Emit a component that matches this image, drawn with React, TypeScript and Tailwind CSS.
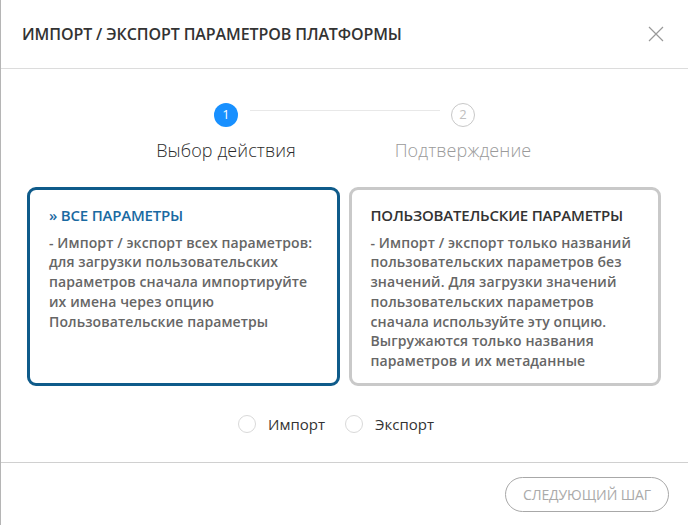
import { useState } from "react";

type Option = {
    id: string;
    title: string;
    text: string;
};

const options: Option[] = [
    {
        id: "all",
        title: "» ВСЕ ПАРАМЕТРЫ",
        text: "- Импорт / экспорт всех параметров: для загрузки пользовательских параметров сначала импортируйте их имена через опцию Пользовательские параметры",
    },
    {
        id: "custom",
        title: "ПОЛЬЗОВАТЕЛЬСКИЕ ПАРАМЕТРЫ",
        text: "- Импорт / экспорт только названий пользовательских параметров без значений. Для загрузки значений пользовательских параметров сначала используйте эту опцию. Выгружаются только названия параметров и их метаданные",
    },
];

export default function App() {
    const [selected, setSelected] = useState("all");
    const [mode, setMode] = useState<string | null>(null);

    return (
        <div
            className="w-[688px] h-[525px] bg-white border-l border-[#b5b5b5] flex flex-col text-[#333]"
            style={{ fontFamily: '"Open Sans", "Noto Sans", sans-serif' }}
        >
            {/* header */}
            <div className="h-[69px] shrink-0 flex items-center justify-between pl-[21px] pr-[24px] border-b border-[#dcdcdc]">
                <h2 className="text-[16px] font-semibold tracking-[-0.1px] text-[#333]">
                    ИМПОРТ / ЭКСПОРТ ПАРАМЕТРОВ ПЛАТФОРМЫ
                </h2>
                <button className="text-[#999]">
                    <svg width="16" height="16" viewBox="0 0 16 16" stroke="currentColor" strokeWidth="1.2">
                        <path d="M1 1 L15 15 M15 1 L1 15" />
                    </svg>
                </button>
            </div>

            {/* body */}
            <div className="flex-1 flex flex-col">
                {/* steps */}
                <div className="pt-[34px] flex justify-center">
                    <div className="flex items-start">
                        <div className="flex flex-col items-center w-[160px]">
                            <div className="w-6 h-6 rounded-full bg-[#1890ff] text-white text-[13px] flex items-center justify-center">
                                1
                            </div>
                            <span className="mt-[10px] text-[18px] font-light text-[#2b2b2b] tracking-[0.1px]">Выбор действия</span>
                        </div>
                        <div className="w-[190px] h-px bg-[#e8e8e8] mt-[7px] ml-[-56px] mr-[-57px]" />
                        <div className="flex flex-col items-center w-[160px]">
                            <div className="w-6 h-6 rounded-full border border-[#c8c8c8] text-[#c0c0c0] text-[13px] flex items-center justify-center">
                                2
                            </div>
                            <span className="mt-[10px] text-[18px] font-light text-[#9a9a9a] tracking-[0.1px]">Подтверждение</span>
                        </div>
                    </div>
                </div>

                {/* cards */}
                <div className="mt-[23px] pl-[26px] pr-[27px] grid grid-cols-2 gap-[9px]">
                    {options.map((o) => {
                        const active = o.id === selected;
                        return (
                            <div
                                key={o.id}
                                onClick={() => setSelected(o.id)}
                                className={
                                    "h-[199px] rounded-[9px] border-[3px] px-[19px] pt-[14px] cursor-pointer " +
                                    (active ? "border-[#0f5b8a]" : "border-[#c9c9c9]")
                                }
                            >
                                <div
                                    className={
                                        "text-[15px] font-semibold tracking-[-0.2px] " +
                                        (active ? "text-[#1a6aa2]" : "text-[#333]")
                                    }
                                >
                                    {o.title}
                                </div>
                                <p className="mt-[6px] text-[14px] leading-[19.8px] font-semibold text-[#666] tracking-[0.1px]">
                                    {o.text}
                                </p>
                            </div>
                        );
                    })}
                </div>

                {/* radios */}
                <div className="mt-[27px] flex justify-center gap-[20px] pr-[17px]">
                    {["Импорт", "Экспорт"].map((r) => (
                        <label key={r} className="flex items-center gap-[12px] cursor-pointer" onClick={() => setMode(r)}>
                            <span
                                className={
                                    "w-[18px] h-[18px] rounded-full border " +
                                    (mode === r ? "border-[#1890ff] border-[5px]" : "border-[#d9d9d9]")
                                }
                            />
                            <span className="text-[15px] text-[#333]">{r}</span>
                        </label>
                    ))}
                </div>
            </div>

            {/* footer */}
            <div className="h-[63px] shrink-0 border-t border-[#d0d0d0] flex items-center justify-end pr-[19px]">
                <button
                    disabled={!mode}
                    className="h-[35px] px-[17px] rounded-full border border-[#a8a8a8] text-[14px] text-[#aaa] tracking-[-0.1px]"
                >
                    СЛЕДУЮЩИЙ ШАГ
                </button>
            </div>
        </div>
    );
}
